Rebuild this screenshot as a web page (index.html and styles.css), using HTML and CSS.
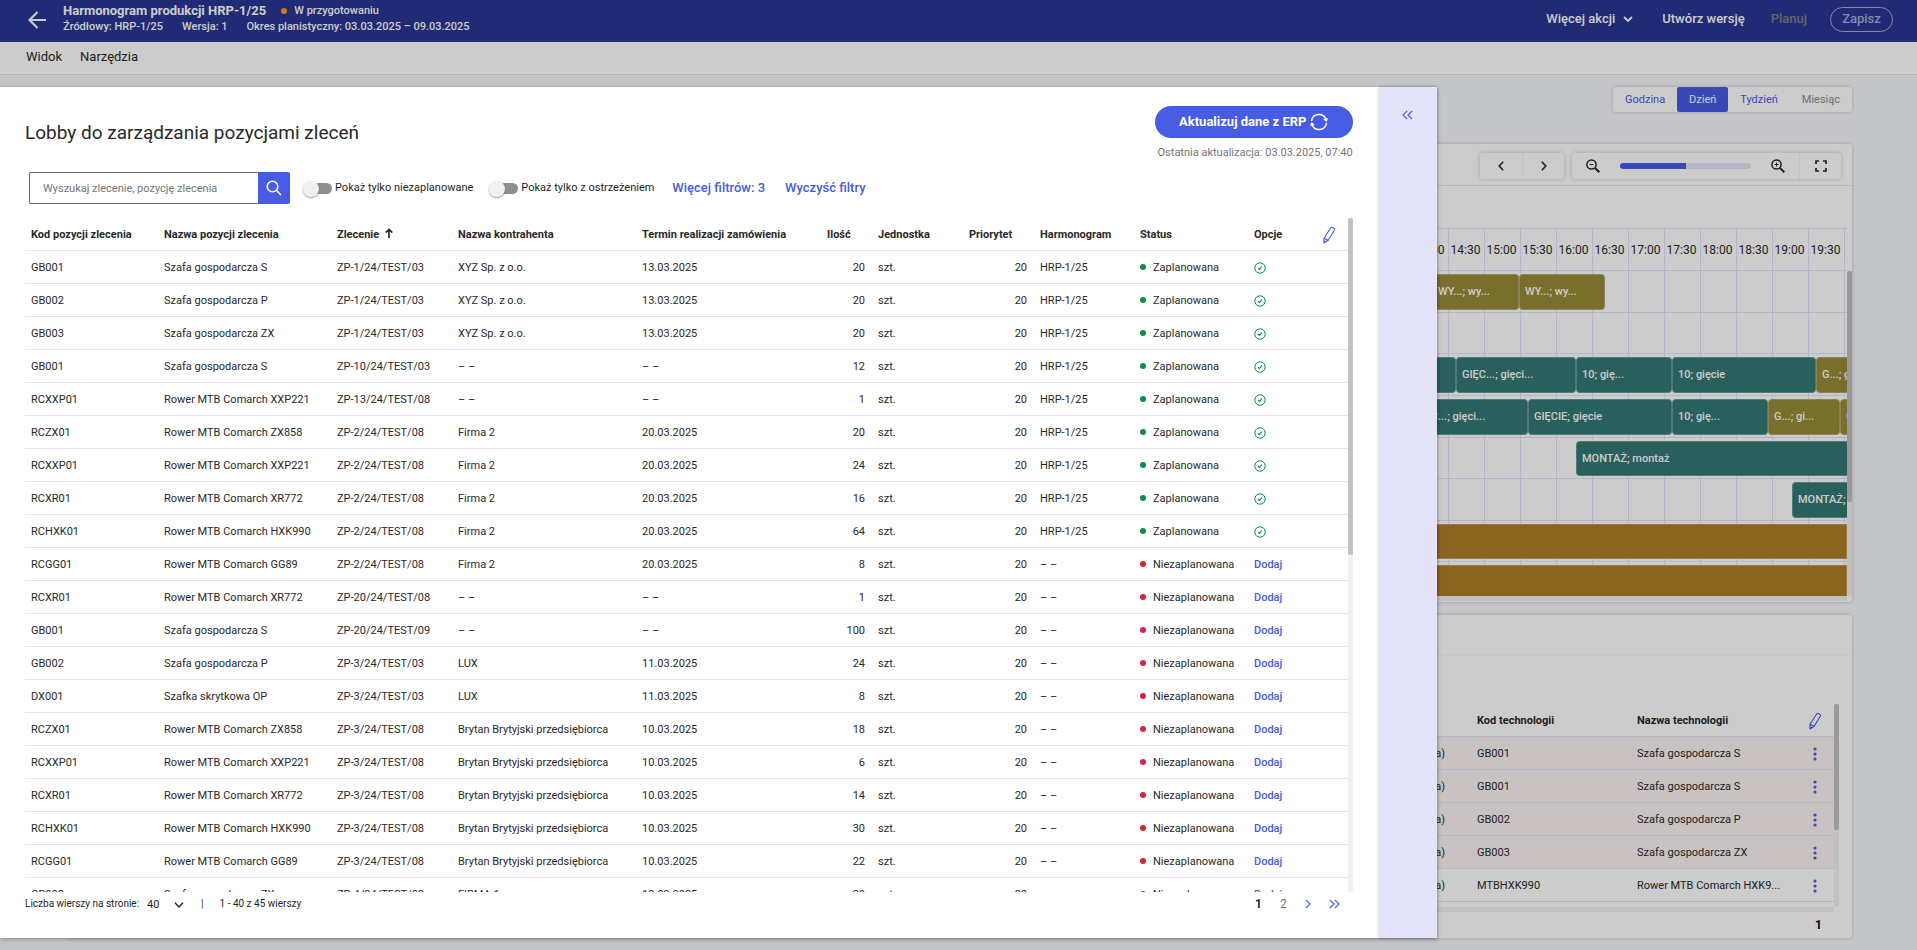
FILE: index.html
```html
<!DOCTYPE html>
<html lang="pl">
<head>
<meta charset="utf-8">
<title>Harmonogram produkcji HRP-1/25</title>
<link rel="stylesheet" href="styles.css">
</head>
<body>
<svg class="sprite" width="0" height="0" aria-hidden="true">
  <symbol id="pencil" viewBox="0 0 14 18"><path d="M8.600 2 Q9.200 1 10.200 1.400 L12 2.400 Q12.900 3 12.400 4 L6.200 14.300 L2 17 L2 12.200 Z M2 12.200 L6.200 14.300 M2 14.800 L3.800 15.800" fill="none" stroke="currentColor" stroke-width="1.100" stroke-linejoin="round"/></symbol>
  <symbol id="ok" viewBox="0 0 12 12"><circle cx="6" cy="6" r="5.2" fill="none" stroke="currentColor" stroke-width="1"/><path d="M4 6.200 L5.500 7.500 L7.800 4.600" fill="none" stroke="currentColor" stroke-width="1.2"/></symbol>
  <symbol id="dots" viewBox="0 0 4 14"><circle cx="2" cy="2" r="1.6"/><circle cx="2" cy="7" r="1.6"/><circle cx="2" cy="12" r="1.6"/></symbol>
</svg>

<header class="topbar">
  <button class="back" type="button" aria-label="Wstecz"><svg width="18" height="18" viewBox="0 0 18 18"><path d="M18 9 H2 M9.500 1 L1.500 9 L9.500 17" fill="none" stroke="currentColor" stroke-width="2.200"/></svg></button>
  <div class="headline">
    <div class="headline-row"><h1>Harmonogram produkcji HRP-1/25</h1><span class="state"><i></i>W przygotowaniu</span></div>
    <div class="headline-row meta"><span>Źródłowy: HRP-1/25</span><span>Wersja: 1</span><span>Okres planistyczny: 03.03.2025 – 09.03.2025</span></div>
  </div>
  <div class="actions">
    <button type="button" class="more">Więcej akcji <svg width="10" height="6" viewBox="0 0 10 6"><path d="M1 1 L5 5 L9 1" fill="none" stroke="currentColor" stroke-width="1.800"/></svg></button>
    <button type="button">Utwórz wersję</button>
    <button type="button" class="muted">Planuj</button>
    <button type="button" class="save">Zapisz</button>
  </div>
</header>
<nav class="menubar"><a href="#widok">Widok</a><a href="#narzedzia">Narzędzia</a></nav>

<main class="workspace">
  <div class="range-row">
    <div class="range">
      <button type="button">Godzina</button><button type="button" class="on">Dzień</button><button type="button">Tydzień</button><button type="button" class="off">Miesiąc</button>
    </div>
  </div>
  <section class="card chart">
    <div class="chart-tools">
      <div class="group">
        <button type="button" aria-label="Poprzedni"><svg width="6" height="10" viewBox="0 0 6 10"><path d="M5.200 .8 L1.200 5 L5.200 9.200" fill="none" stroke="currentColor" stroke-width="1.600"/></svg></button>
        <button type="button" aria-label="Następny"><svg width="6" height="10" viewBox="0 0 6 10"><path d="M.8 .8 L4.800 5 L.8 9.200" fill="none" stroke="currentColor" stroke-width="1.600"/></svg></button>
      </div>
      <div class="group">
        <button type="button" aria-label="Pomniejsz"><svg width="14" height="14" viewBox="0 0 14 14"><path d="M9 9 L13.300 13.300" stroke="currentColor" stroke-width="2"/><circle cx="5.500" cy="5.500" r="4.600" fill="none" stroke="currentColor" stroke-width="1.500"/><path d="M3.500 5.500 H7.500" stroke="currentColor"/></svg></button>
        <div class="zoom"><div class="zoom-track"><div class="zoom-value"></div></div></div>
        <button type="button" aria-label="Powiększ"><svg width="14" height="14" viewBox="0 0 14 14"><path d="M9 9 L13.300 13.300" stroke="currentColor" stroke-width="2"/><circle cx="5.500" cy="5.500" r="4.600" fill="none" stroke="currentColor" stroke-width="1.500"/><path d="M3.500 5.500 H7.500 M5.500 3.500 V7.500" stroke="currentColor"/></svg></button>
        <button type="button" aria-label="Pełny ekran"><svg width="12" height="12" viewBox="0 0 12 12"><path d="M1 4 V1 H4 M8 1 H11 V4 M11 8 V11 H8 M4 11 H1 V8" fill="none" stroke="currentColor" stroke-width="1.700"/></svg></button>
      </div>
    </div>
    <div class="gantt">
      <div class="hours"><span>14:00</span><span>14:30</span><span>15:00</span><span>15:30</span><span>16:00</span><span>16:30</span><span>17:00</span><span>17:30</span><span>18:00</span><span>18:30</span><span>19:00</span><span>19:30</span></div>
      <div class="lanes-view"><div class="lanes">
        <div class="lane">
          <div class="bar olive" style="width:87px;right:328px">WY...; wy...</div>
          <div class="bar olive" style="width:86px;right:242px">WY...; wy...</div>
        </div>
        <div class="lane"></div>
        <div class="lane">
          <div class="bar teal" style="width:120px;right:391px"></div>
          <div class="bar teal" style="width:120px;right:271px">GIĘC...; gięci...</div>
          <div class="bar teal" style="width:96px;right:175px">10; gię...</div>
          <div class="bar teal" style="width:144px;right:31px">10; gięcie</div>
          <div class="bar olive" style="width:72px;right:-41px">G...; gi...</div>
        </div>
        <div class="lane">
          <div class="bar teal" style="width:120px;right:319px">GIĘC...; gięci...</div>
          <div class="bar teal" style="width:144px;right:175px">GIĘCIE; gięcie</div>
          <div class="bar teal" style="width:96px;right:79px">10; gię...</div>
          <div class="bar olive" style="width:72px;right:7px">G...; gi...</div>
          <div class="bar olive" style="width:72px;right:-65px">G...; gi...</div>
        </div>
        <div class="lane"><div class="bar teal" style="width:360px;right:-89px">MONTAŻ; montaż</div></div>
        <div class="lane"><div class="bar teal" style="width:144px;right:-89px">MONTAŻ; montaż</div></div>
        <div class="lane"><div class="bar brown"></div></div>
        <div class="lane"><div class="bar brown"></div></div>
      </div></div>
      <div class="scroll-v"><div class="thumb"></div></div>
      <div class="scroll-h"></div>
    </div>
  </section>
  <section class="card tech">
    <div class="tech-head"></div>
    <div class="tech-view">
      <div class="tech-clip">
      <table class="grid tech-table">
        <colgroup><col><col class="t-kod"><col class="t-nazwa"><col class="t-edit"></colgroup>
        <thead><tr><th></th><th>Kod technologii</th><th>Nazwa technologii</th><th class="icon-cell"><svg width="14" height="18"><use href="#pencil"/></svg></th></tr></thead>
        <tbody>
          <tr class="warn"><td class="cut">(Domyślna)</td><td>GB001</td><td>Szafa gospodarcza S</td><td class="icon-cell"><svg width="4" height="14"><use href="#dots"/></svg></td></tr>
          <tr class="warn"><td class="cut">(Domyślna)</td><td>GB001</td><td>Szafa gospodarcza S</td><td class="icon-cell"><svg width="4" height="14"><use href="#dots"/></svg></td></tr>
          <tr class="warn"><td class="cut">(Domyślna)</td><td>GB002</td><td>Szafa gospodarcza P</td><td class="icon-cell"><svg width="4" height="14"><use href="#dots"/></svg></td></tr>
          <tr class="warn"><td class="cut">(Domyślna)</td><td>GB003</td><td>Szafa gospodarcza ZX</td><td class="icon-cell"><svg width="4" height="14"><use href="#dots"/></svg></td></tr>
          <tr><td class="cut">(Domyślna)</td><td>MTBHXK990</td><td>Rower MTB Comarch HXK9...</td><td class="icon-cell"><svg width="4" height="14"><use href="#dots"/></svg></td></tr>
        </tbody>
      </table>
      </div>
      <div class="scroll-v"><div class="thumb"></div></div>
      <div class="scroll-h"></div>
    </div>
    <div class="tech-foot">1</div>
  </section>
</main>
<div class="backdrop"></div>

<aside class="lobby" role="dialog" aria-labelledby="lobby-title">
  <div class="lobby-body">
    <div class="lobby-head">
      <h2 id="lobby-title">Lobby do zarządzania pozycjami zleceń</h2>
      <div class="sync">
        <button type="button" class="sync-btn">Aktualizuj dane z ERP <svg width="18" height="18" viewBox="0 0 18 18"><path d="M1.500 8 A7.500 7.500 0 0 1 16 6.500 M16.500 10 A7.500 7.500 0 0 1 2 11.500" fill="none" stroke="currentColor" stroke-width="1.500"/><path d="M13.200 6 L18 5.200 L16.400 9 Z M4.800 12 L0 12.800 L1.600 9 Z" fill="currentColor"/></svg></button>
        <p>Ostatnia aktualizacja: 03.03.2025, 07:40</p>
      </div>
    </div>
    <div class="filters">
      <form class="search"><input type="text" aria-label="Wyszukaj" placeholder="Wyszukaj zlecenie, pozycję zlecenia"><button type="button" aria-label="Szukaj"><svg width="16" height="16" viewBox="0 0 16 16"><circle cx="6.500" cy="6.500" r="5.300" fill="none" stroke="currentColor" stroke-width="1.500"/><path d="M10.300 10.300 L15 15" stroke="currentColor" stroke-width="1.600"/></svg></button></form>
      <label class="toggle"><input type="checkbox">Pokaż tylko niezaplanowane</label>
      <label class="toggle"><input type="checkbox">Pokaż tylko z ostrzeżeniem</label>
      <a class="filter-link" href="#filtry">Więcej filtrów: 3</a>
      <a class="filter-link" href="#wyczysc">Wyczyść filtry</a>
    </div>
    <div class="orders">
      <div class="orders-clip">
      <table class="grid">
        <colgroup><col class="c-kod"><col class="c-nazwa"><col class="c-zlec"><col class="c-kontr"><col class="c-termin"><col class="c-ilosc"><col class="c-jedn"><col class="c-prior"><col class="c-harm"><col class="c-status"><col class="c-opcje"><col class="c-edit"></colgroup>
        <thead><tr><th>Kod pozycji zlecenia</th><th>Nazwa pozycji zlecenia</th><th>Zlecenie <svg class="sort" width="8" height="10" viewBox="0 0 8 10"><path d="M4 10 V1.500 M.7 4.700 L4 1.400 L7.300 4.700" fill="none" stroke="currentColor" stroke-width="1.700"/></svg></th><th>Nazwa kontrahenta</th><th>Termin realizacji zamówienia</th><th>Ilość</th><th>Jednostka</th><th>Priorytet</th><th>Harmonogram</th><th>Status</th><th>Opcje</th><th class="icon-cell"><svg width="14" height="18"><use href="#pencil"/></svg></th></tr></thead>
        <tbody id="rows"></tbody>
      </table>
      </div>
      <div class="scroll-v"><div class="thumb"></div></div>
    </div>
    <div class="pager">
      <label for="size">Liczba wierszy na stronie:</label>
      <span class="size"><select id="size"><option>40</option></select><svg width="10" height="6" viewBox="0 0 10 6"><path d="M1 .8 L5 5 L9 .8" fill="none" stroke="currentColor" stroke-width="1.300"/></svg></span>
      <span class="sep">|</span>
      <span>1 - 40 z 45 wierszy</span>
      <div class="pages"><a class="current" href="#1">1</a><a href="#2">2</a>
        <a class="nav" href="#next" aria-label="Następna"><svg width="6" height="10" viewBox="0 0 6 10"><path d="M.8 .8 L5 5 L.8 9.200" fill="none" stroke="currentColor" stroke-width="1.200"/></svg></a>
        <a class="nav" href="#last" aria-label="Ostatnia"><svg width="11" height="10" viewBox="0 0 11 10"><path d="M.8 .8 L5 5 L.8 9.200 M5.800 .8 L10 5 L5.800 9.200" fill="none" stroke="currentColor" stroke-width="1.200"/></svg></a></div>
    </div>
  </div>
  <div class="fold"><button type="button" aria-label="Zwiń"><svg width="11" height="10" viewBox="0 0 11 10"><path d="M5.200 .8 L1 5 L5.200 9.200 M10.200 .8 L6 5 L10.200 9.200" fill="none" stroke="currentColor" stroke-width="1.200"/></svg></button></div>
</aside>
<script src="rows.js"></script>
</body>
</html>
```
FILE: styles.css
```css
* { box-sizing: border-box; }
html, body { height: 100%; }
body { margin: 0; display: flex; flex-direction: column; overflow: hidden; background: #f6f7fa; color: #292929; font: 11px/16px Roboto, sans-serif; }
button { border: 0; padding: 0; background: none; color: inherit; font: inherit; cursor: pointer; }
a { color: inherit; text-decoration: none; }
h1, h2, p { margin: 0; }
svg { display: block; }
.sprite { position: absolute; }

.topbar { flex: none; display: flex; align-items: center; height: 42px; padding: 0 24px 4px 28px; background: #283593; color: #fff; }
.back { margin-top: 2px; }
.headline { margin-left: 17px; font-weight: 500; }
.headline-row { display: flex; align-items: center; }
h1 { font-size: 13px; line-height: 16px; font-weight: 700; }
.state { display: flex; align-items: center; gap: 7px; margin-left: 15px; }
.state i { width: 6px; height: 6px; border-radius: 50%; background: #f9a11b; }
.meta { gap: 19px; }
.actions { margin-left: auto; display: flex; align-items: center; font-size: 13px; font-weight: 500; }
.actions button { margin-left: 29px; }
.more { display: flex; align-items: center; gap: 8px; }
.actions .muted { margin-left: 26px; color: #808080; }
.actions .save { width: 63px; height: 25px; margin-left: 23px; border: 1px solid #a9aed4; border-radius: 13px; color: #a9aed4; }
.menubar { flex: none; display: flex; gap: 18px; height: 33px; padding: 6px 26px 0; border-bottom: 1px solid #e3e3f9; background: #fff; font-size: 13px; line-height: 18px; }

.workspace { flex: 1; min-height: 0; display: flex; flex-direction: column; padding: 12px 65px; }
.card { background: #fff; border-radius: 3px; box-shadow: 0 0 4px rgba(0, 0, 0, .2); }
.range-row { flex: none; height: 57px; }
.range { display: flex; width: 239px; margin-left: auto; border-radius: 3px; background: #fff; box-shadow: 0 0 4px rgba(0, 0, 0, .2); color: #485be3; }
.range button { flex: auto; height: 25px; padding: 0 11px; }
.range .on { background: #485be3; color: #fff; border-radius: 2px; }
.range .off { color: #8c8c8c; }

.chart { flex: 458; min-height: 0; display: flex; flex-direction: column; }
.chart-tools { flex: none; display: flex; justify-content: flex-end; align-items: center; gap: 8px; height: 42px; padding: 3px 11px 0 0; border-bottom: 1px solid #e3e3f9; }
.group { display: flex; align-items: center; height: 26px; border-radius: 3px; box-shadow: 0 0 4px rgba(0, 0, 0, .2); }
.group button { display: grid; place-items: center; width: 42px; height: 26px; }
.group button + button { border-left: 1px solid #f3f3f3; }
.zoom { width: 143px; padding: 0 6px; }
.zoom-track { height: 6px; border-radius: 3px; background: #e3e3f9; overflow: hidden; }
.zoom-value { width: 50%; height: 6px; background: #485be3; }
.gantt { flex: 1; min-height: 0; display: grid; grid-template-columns: 1fr 5px; grid-template-rows: 43px 1fr 5px; margin: 42px 0 1px; }
.hours { grid-column: 1; display: flex; justify-content: flex-end; padding-right: 2px; border-top: 1px solid #e3e3f9; border-bottom: 1px solid #e3e3f9; overflow: hidden; font-size: 12px; }
.hours span { flex: none; width: 36px; padding-right: 2px; border-right: 1px solid #e3e3f9; text-align: center; line-height: 42px; }
.lanes-view { grid-column: 1; overflow: hidden; background: repeating-linear-gradient(to left, transparent 0 2px, #e3e3f9 2px 3px, transparent 3px 36px) right; }
.lanes { display: grid; grid-template-rows: repeat(8, 1fr); height: 333px; }
.lane { position: relative; border-bottom: 1px solid #e3e3f9; }
.bar { position: absolute; top: 3px; bottom: 2px; padding-left: 5px; border: 1px solid rgba(255, 255, 255, .25); border-radius: 4px; color: #fff; font-weight: 500; line-height: 34px; white-space: nowrap; }
.olive { background: #968b38; }
.teal { background: #347773; }
.brown { left: 0; right: 0; border-radius: 0; background: #ac7e27; }
.scroll-v { background: #f1f1f1; border-radius: 2px; }
.scroll-h { background: #f1f1f1; border-radius: 2px; }
.thumb { background: #c1c1c1; border-radius: 2px; }
.gantt .thumb { height: 71%; }

.tech { flex: 323; min-height: 0; display: flex; flex-direction: column; margin-top: 13px; }
.tech-head { flex: none; height: 41px; margin-bottom: 48px; border-bottom: 1px solid #f9f9f9; }
.tech-view { flex: 1; min-height: 0; display: grid; grid-template-columns: 1fr 5px; grid-template-rows: 1fr 5px; padding: 0 13px 0 20px; }
.tech-clip { overflow: hidden; }
.tech-view .thumb { height: 62%; }
.tech-foot { flex: none; height: 26px; padding: 5px 30px 0; text-align: right; font-size: 12px; font-weight: 700; color: #000; }
.t-kod { width: 160px; }
.t-nazwa { width: 165px; }
.t-edit { width: 38px; }
.grid.tech-table .cut { padding-right: 26px; text-align: right; }
.tech-table svg { margin: 0 auto; color: #485be3; fill: #485be3; }
.warn { background: #fbf3f3; }

.grid { width: 100%; table-layout: fixed; border-collapse: separate; border-spacing: 0; }
.grid th, .grid td { height: 33px; padding: 2px 6px 0; border-bottom: 1px solid #e3e3f9; text-align: left; white-space: nowrap; }
.grid th { font-weight: 700; }
.grid .num { padding-right: 7px; text-align: right; }
.grid .icon-cell { padding: 1px 0 0; color: #485be3; }
.grid .icon-cell svg { margin: 0 auto; }

.backdrop { position: absolute; inset: 0; background: rgba(0, 0, 0, .2); }
.lobby { position: absolute; top: 87px; bottom: 12px; left: 0; width: calc(75% - 1px); display: flex; background: #fff; box-shadow: 0 1px 4px rgba(0, 0, 0, .3); }
.lobby-body { flex: 1; min-width: 0; display: flex; flex-direction: column; padding: 19px 26px 0 25px; }
.fold { flex: none; width: 58px; padding-top: 23px; background: #e3e3f9; box-shadow: 0 0 3px rgba(0, 0, 0, .25); }
.fold button { display: block; margin: 0 auto; color: #485be3; }
.lobby-head { flex: none; display: flex; justify-content: space-between; height: 66px; }
.lobby-head h2 { padding-top: 15px; font-size: 19px; line-height: 24px; font-weight: 400; }
.sync { text-align: right; color: #757575; }
.sync-btn { display: flex; align-items: center; justify-content: center; gap: 4px; width: 198px; height: 32px; margin-bottom: 7px; border-radius: 16px; background: #485be3; color: #fff; font-size: 13px; font-weight: 700; }
.filters { flex: none; display: flex; align-items: center; height: 32px; margin-bottom: 14px; padding-left: 4px; }
.search { display: flex; width: 261px; height: 32px; margin-right: 13px; }
.search input { flex: 1; min-width: 0; padding: 2px 13px 0; border: 1px solid #6b6860; border-right: 0; border-radius: 2px 0 0 2px; font: inherit; }
.search input::placeholder { color: #757575; }
.search button { display: grid; place-items: center; width: 32px; border-radius: 0 2px 2px 0; background: #485be3; color: #fff; }
.toggle { display: flex; align-items: center; gap: 3px; margin-right: 16px; color: #1f1f1f; }
.toggle input { appearance: none; position: relative; width: 29px; height: 11px; margin: 0; border-radius: 6px; background: linear-gradient(to right, transparent 4px, #8f8f8f 4px); }
.toggle input::before { content: ""; position: absolute; left: 0; top: -2px; width: 16px; height: 16px; border-radius: 50%; background: #f1f1f1; box-shadow: 0 1px 2px rgba(0, 0, 0, .4); }
.filter-link { margin-left: 2px; margin-right: 18px; color: #485be3; font-size: 13px; font-weight: 500; }
.orders { flex: 1; min-height: 0; display: grid; grid-template-columns: 1fr 5px; grid-template-rows: 100%; }
.orders-clip { overflow: hidden; }
.orders .thumb { height: 50%; }
.sort { display: inline-block; margin-left: 3px; }
.c-kod { width: 133px; }
.c-nazwa { width: 173px; }
.c-zlec { width: 121px; }
.c-kontr { width: 184px; }
.c-termin { width: 185px; }
.c-ilosc { width: 51px; }
.c-jedn { width: 91px; }
.c-prior { width: 71px; }
.c-harm { width: 100px; }
.c-status { width: 114px; }
.c-opcje { width: 62px; }
.c-edit { width: 38px; }
.dot { display: inline-block; width: 6px; height: 6px; margin-right: 7px; border-radius: 50%; vertical-align: 1px; }
.planned { background: #0a8f45; }
.unplanned { background: #dc2440; }
.ok { color: #0a8f45; }
.add { color: #485be3; font-weight: 500; }
.pager { flex: none; display: flex; align-items: flex-start; height: 46px; padding-top: 4px; font-size: 10px; color: #1f1f1f; }
.size { display: flex; align-items: center; gap: 11px; margin-left: 8px; padding-top: 1px; }
.size select { appearance: none; width: 16px; border: 0; padding: 0; background: none; color: inherit; font: inherit; font-size: 11px; }
.sep { margin: 0 16px 0 17px; }
.pages { display: flex; align-items: center; gap: 18px; margin-left: auto; padding-right: 13px; font-size: 12px; color: #757575; }
.pages .current { color: #1f1f1f; font-weight: 700; }
.pages .nav { color: #485be3; }
```
FILE: rows.js
```js
const none = "– –";
const S = "Szafa gospodarcza ", R = "Rower MTB Comarch ";
const orders = [
  ["GB001", S + "S", "1/24/TEST/03", "XYZ Sp. z o.o.", "13.03.2025", 20, 1],
  ["GB002", S + "P", "1/24/TEST/03", "XYZ Sp. z o.o.", "13.03.2025", 20, 1],
  ["GB003", S + "ZX", "1/24/TEST/03", "XYZ Sp. z o.o.", "13.03.2025", 20, 1],
  ["GB001", S + "S", "10/24/TEST/03", none, none, 12, 1],
  ["RCXXP01", R + "XXP221", "13/24/TEST/08", none, none, 1, 1],
  ["RCZX01", R + "ZX858", "2/24/TEST/08", "Firma 2", "20.03.2025", 20, 1],
  ["RCXXP01", R + "XXP221", "2/24/TEST/08", "Firma 2", "20.03.2025", 24, 1],
  ["RCXR01", R + "XR772", "2/24/TEST/08", "Firma 2", "20.03.2025", 16, 1],
  ["RCHXK01", R + "HXK990", "2/24/TEST/08", "Firma 2", "20.03.2025", 64, 1],
  ["RCGG01", R + "GG89", "2/24/TEST/08", "Firma 2", "20.03.2025", 8, 0],
  ["RCXR01", R + "XR772", "20/24/TEST/08", none, none, 1, 0],
  ["GB001", S + "S", "20/24/TEST/09", none, none, 100, 0],
  ["GB002", S + "P", "3/24/TEST/03", "LUX", "11.03.2025", 24, 0],
  ["DX001", "Szafka skrytkowa OP", "3/24/TEST/03", "LUX", "11.03.2025", 8, 0],
  ["RCZX01", R + "ZX858", "3/24/TEST/08", "Brytan Brytyjski przedsiębiorca", "10.03.2025", 18, 0],
  ["RCXXP01", R + "XXP221", "3/24/TEST/08", "Brytan Brytyjski przedsiębiorca", "10.03.2025", 6, 0],
  ["RCXR01", R + "XR772", "3/24/TEST/08", "Brytan Brytyjski przedsiębiorca", "10.03.2025", 14, 0],
  ["RCHXK01", R + "HXK990", "3/24/TEST/08", "Brytan Brytyjski przedsiębiorca", "10.03.2025", 30, 0],
  ["RCGG01", R + "GG89", "3/24/TEST/08", "Brytan Brytyjski przedsiębiorca", "10.03.2025", 22, 0],
  ["GB003", S + "ZX", "4/24/TEST/03", "FIRMA 1", "12.03.2025", 20, 0]
];
document.getElementById("rows").innerHTML = orders.map(([code, name, order, client, date, qty, planned]) => `<tr>
  <td>${code}</td><td>${name}</td><td>ZP-${order}</td><td>${client}</td><td>${date}</td>
  <td class="num">${qty}</td><td>szt.</td><td class="num">20</td><td>${planned ? "HRP-1/25" : none}</td>
  <td><i class="dot ${planned ? "planned" : "unplanned"}"></i>${planned ? "Zaplanowana" : "Niezaplanowana"}</td>
  <td>${planned ? '<svg class="ok" width="12" height="12"><use href="#ok"/></svg>' : '<a class="add" href="#dodaj">Dodaj</a>'}</td><td></td></tr>`).join("");
```
